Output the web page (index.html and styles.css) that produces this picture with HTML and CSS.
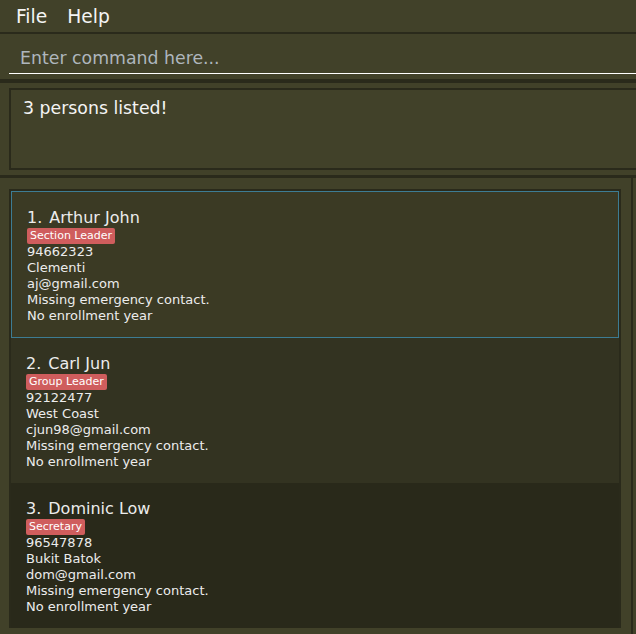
FILE: index.html
```html
<!DOCTYPE html>
<html>
<head>
<meta charset="utf-8">
<link rel="stylesheet" href="styles.css">
</head>
<body>
<div class="menubar">
  <span class="menu">File</span>
  <span class="menu">Help</span>
</div>
<div class="command-pane">
  <input class="command-field" type="text" placeholder="Enter command here...">
</div>
<div class="result-pane">
  <div class="result-box">3 persons listed!</div>
</div>
<div class="list-pane">
  <div class="list-box">
    <div class="card selected">
      <div class="name"><span class="idx">1.</span><span>Arthur John</span></div>
      <div class="tags"><span class="tag">Section Leader</span></div>
      <div class="line">94662323</div>
      <div class="line">Clementi</div>
      <div class="line">aj@gmail.com</div>
      <div class="line">Missing emergency contact.</div>
      <div class="line">No enrollment year</div>
    </div>
    <div class="card odd">
      <div class="name"><span class="idx">2.</span><span>Carl Jun</span></div>
      <div class="tags"><span class="tag">Group Leader</span></div>
      <div class="line">92122477</div>
      <div class="line">West Coast</div>
      <div class="line">cjun98@gmail.com</div>
      <div class="line">Missing emergency contact.</div>
      <div class="line">No enrollment year</div>
    </div>
    <div class="card even">
      <div class="name"><span class="idx">3.</span><span>Dominic Low</span></div>
      <div class="tags"><span class="tag">Secretary</span></div>
      <div class="line">96547878</div>
      <div class="line">Bukit Batok</div>
      <div class="line">dom@gmail.com</div>
      <div class="line">Missing emergency contact.</div>
      <div class="line">No enrollment year</div>
    </div>
  </div>
</div>
</body>
</html>
```
FILE: styles.css
```css
html, body {
  margin: 0;
  padding: 0;
}
body {
  width: 636px;
  height: 634px;
  overflow: hidden;
  background: #414129;
  font-family: "DejaVu Sans", "Liberation Sans", sans-serif;
  color: #f2f2f2;
}
.menubar {
  height: 32px;
  border-bottom: 2px solid #2a2a1b;
  display: flex;
  align-items: flex-start;
  padding-left: 6px;
}
.menu {
  font-size: 18.67px;
  line-height: 22px;
  padding: 6px 10px 0 10px;
  color: #f4f4f4;
}
.command-pane {
  height: 40px;
  padding: 0 0 5px 9px;
  border-bottom: 4px solid #2a2a1b;
}
.command-field {
  display: block;
  box-sizing: border-box;
  width: 640px;
  height: 40px;
  margin: 0;
  padding: 14px 0 5px 11px;
  border: none;
  border-bottom: 1px solid #ffffff;
  background: transparent;
  font-family: "DejaVu Sans", "Liberation Sans", sans-serif;
  font-size: 17.33px;
  line-height: 20px;
  color: #f2f2f2;
  outline: none;
}
.command-field::placeholder {
  color: #aeb6bd;
  opacity: 1;
}
.result-pane {
  height: 82px;
  padding: 5px 0 5px 9px;
  border-bottom: 3px solid #2a2a1b;
}
.result-box {
  box-sizing: border-box;
  width: 640px;
  height: 82px;
  border: 2px solid #2a2a1b;
  padding: 8px 0 0 12px;
  font-size: 17.33px;
  line-height: 20px;
  color: #f4f4f4;
}
.list-pane {
  width: 622px;
  height: 460px;
  padding: 11px 0 0 9px;
  border-right: 2px solid #2a2a1b;
}
.list-box {
  width: 608px;
  border: 2px solid #2a2a1b;
  border-bottom: none;
}
.card {
  padding: 16px 0 13px 15px;
  height: 116px;
}
.card.selected {
  background: #3b3a24;
  border: 1px solid #3d7c93;
  width: 591px;
}
.card.odd {
  background: #333321;
}
.card.even {
  background: #29291a;
}
.name {
  font-size: 16px;
  line-height: 20px;
  color: #ececec;
  display: flex;
  gap: 7px;
}
.tags {
  display: flex;
  height: 16px;
}
.tag {
  background: #cf5d5d;
  color: #ffffff;
  font-size: 11px;
  line-height: 16px;
  padding: 0 3px;
  border-radius: 2px;
}
.line {
  font-size: 13px;
  line-height: 16px;
  color: #ececec;
}
```
